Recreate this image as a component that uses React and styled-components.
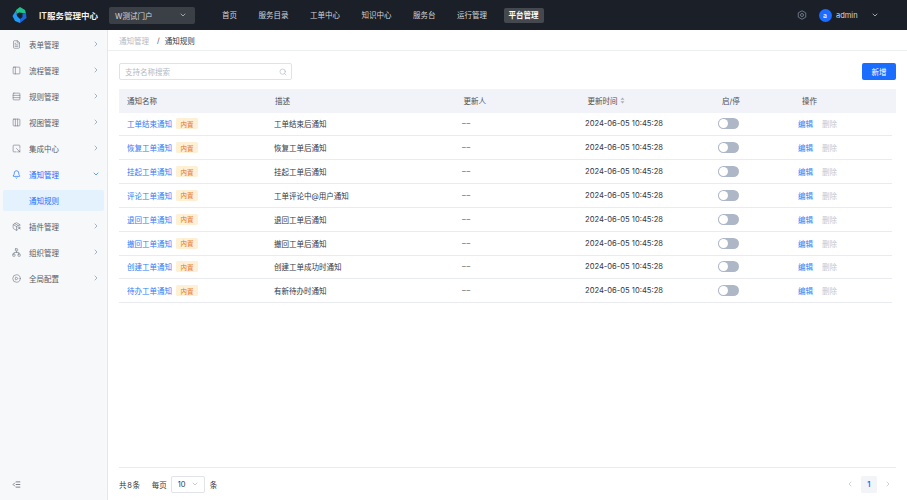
import React from 'react';
import styled, { createGlobalStyle } from 'styled-components';
import {
  FileText,
  PanelLeft,
  Rows3,
  Columns3,
  SquareArrowOutDownRight,
  Bell,
  PackageSearch,
  Network,
  CirclePlay,
  ChevronRight,
  ChevronDown,
  ChevronLeft,
  Search,
  IndentDecrease,
} from 'lucide-react';

const GlobalStyle = createGlobalStyle`
  html, body {
    margin: 0;
    padding: 0;
    height: 100%;
  }
  body {
    font-family: Inter, "Noto Sans CJK SC", sans-serif;
    color: #33383f;
    overflow: hidden;
  }
`;

const Page = styled.div`
  display: flex;
  flex-direction: column;
  height: 100vh;
`;

const TopBar = styled.header`
  display: flex;
  align-items: center;
  flex: 0 0 30px;
  height: 30px;
  padding-left: 12px;
  background: #1a1f28;
  color: #e4e6ea;
  font-size: 7.5px;
`;

const BrandTitle = styled.span`
  margin-left: 12px;
  width: 60px;
  font-size: 8.5px;
  font-weight: 600;
  color: #f2f3f5;
  white-space: nowrap;
`;

const PortalSelect = styled.div`
  display: flex;
  align-items: center;
  justify-content: space-between;
  width: 86px;
  height: 17px;
  margin-left: 10px;
  padding: 0 8px 0 6px;
  box-sizing: border-box;
  border-radius: 2px;
  background: #3b4047;
  color: #d5d7da;
`;

const Nav = styled.nav`
  display: flex;
  align-items: center;
  gap: 11.5px;
  margin-left: 22px;
`;

const NavItem = styled.span`
  padding: 4px 5px;
  border-radius: 2px;
  line-height: 7px;
  color: ${(p) => (p.$active ? '#fff' : '#d3d5d9')};
  font-weight: ${(p) => (p.$active ? 600 : 400)};
  background: ${(p) => (p.$active ? '#44494f' : 'transparent')};
`;

const UserArea = styled.div`
  display: flex;
  align-items: center;
  margin-left: auto;
  padding-right: 28px;
`;

const Avatar = styled.span`
  display: flex;
  align-items: center;
  justify-content: center;
  width: 13px;
  height: 13px;
  margin-left: 12px;
  border-radius: 50%;
  background: #1a6dff;
  color: #fff;
  font-size: 7px;
`;

const UserName = styled.span`
  width: 35px;
  margin-left: 4.5px;
  font-size: 7.5px;
  color: #d8dade;
`;

const Body = styled.div`
  display: flex;
  flex: 1;
  min-height: 0;
`;

const Sidebar = styled.aside`
  display: flex;
  flex-direction: column;
  flex: 0 0 108px;
  padding-top: 1px;
  box-sizing: border-box;
  background: #f7f8fa;
  border-right: 1px solid #e4e7ed;
`;

const MenuItem = styled.div`
  display: flex;
  align-items: center;
  flex: 0 0 26px;
  padding: 0 7.5px 0 12px;
  font-size: 7.5px;
  color: ${(p) => (p.$active ? '#1a6dff' : '#565c66')};
  svg {
    flex: none;
  }
`;

const MenuLabel = styled.span`
  flex: 1;
  margin-left: 8px;
`;

const SubItem = styled.div`
  display: flex;
  align-items: center;
  height: 21px;
  margin: 2.5px 3px;
  padding-left: 26px;
  border-radius: 2px;
  background: #e3f2fd;
  color: #1a6dff;
  font-size: 7.5px;
`;

const CollapseButton = styled.div`
  display: flex;
  margin-top: auto;
  padding: 0 0 11px 12px;
  color: #565c66;
`;

const Main = styled.main`
  display: flex;
  flex-direction: column;
  flex: 1;
  min-width: 0;
  background: #fff;
`;

const Breadcrumb = styled.div`
  display: flex;
  align-items: center;
  flex: 0 0 21px;
  box-sizing: border-box;
  padding-left: 11px;
  border-bottom: 1px solid #eceef2;
  font-size: 7.5px;
  color: #33383f;
`;

const CrumbLink = styled.span`
  color: #b4b9c2;
`;

const CrumbSlash = styled.span`
  margin: 0 5px 0 8px;
  color: #565c66;
`;

const Content = styled.div`
  display: flex;
  flex-direction: column;
  flex: 1;
  padding: 12px 11px 0;
  min-height: 0;
`;

const Toolbar = styled.div`
  display: flex;
  justify-content: space-between;
  height: 17px;
`;

const SearchBox = styled.div`
  display: flex;
  align-items: center;
  justify-content: space-between;
  width: 173px;
  padding: 0 4.5px 0 5px;
  box-sizing: border-box;
  border: 1px solid #dfe2e8;
  border-radius: 2px;
  font-size: 7.5px;
  color: #b4b9c2;
`;

const AddButton = styled.button`
  width: 34px;
  padding: 0;
  border: none;
  border-radius: 2px;
  background: #1a6dff;
  color: #fff;
  font: inherit;
  font-size: 7.5px;
`;

const HeadRow = styled.div`
  display: grid;
  grid-template-columns: 148px 188.5px 124px 134.5px 80px 1fr;
  align-items: center;
  height: 23.5px;
  margin-top: 9px;
  padding-left: 8px;
  background: #f2f3f8;
  font-size: 7.5px;
  color: #4a4f57;
`;

const Row = styled.div`
  display: grid;
  grid-template-columns: 147px 188px 123px 133px 80px 1fr;
  align-items: center;
  height: 23.85px;
  box-sizing: border-box;
  margin-right: 4px;
  padding-left: 8px;
  border-bottom: 1px solid #e9ebf0;
  font-size: 7.5px;
  color: #33383f;
`;

const NameCell = styled.div`
  display: flex;
  align-items: center;
  gap: 4px;
`;

const NameLink = styled.span`
  color: #2f7bf6;
`;

const Tag = styled.span`
  display: flex;
  align-items: center;
  justify-content: center;
  width: 22px;
  height: 11px;
  border-radius: 1.5px;
  background: #fdf0d5;
  color: #e5761f;
  font-size: 6.5px;
`;

const Placeholder = styled.div`
  letter-spacing: 0.8px;
  color: #565c66;
`;

const TimeCell = styled.div`
  font-size: 7.6px;
`;

const SortCell = styled.div`
  display: flex;
  align-items: center;
  gap: 2.5px;
`;

const Toggle = styled.span`
  display: flex;
  align-items: center;
  width: 21px;
  height: 11px;
  padding-left: 1px;
  box-sizing: border-box;
  border-radius: 6px;
  background: #aeb7c6;
  &::before {
    content: '';
    width: 9px;
    height: 9px;
    border-radius: 50%;
    background: #fff;
  }
`;

const Actions = styled.div`
  display: flex;
  gap: 9px;
`;

const ActionLink = styled.span`
  color: ${(p) => (p.$muted ? '#c3c7cf' : '#2f7bf6')};
`;

const Footer = styled.footer`
  display: flex;
  align-items: center;
  height: 32px;
  margin-top: auto;
  border-top: 1px solid #e9ebf0;
  font-size: 7.5px;
  color: #33383f;
`;

const PageSize = styled.div`
  display: flex;
  align-items: center;
  justify-content: space-between;
  width: 34px;
  height: 17px;
  margin: 0 5px 0 4px;
  padding: 0 5px 0 6px;
  box-sizing: border-box;
  border: 1px solid #e0e3e9;
  border-radius: 2px;
`;

const Total = styled.span`
  margin-right: 11px;
  letter-spacing: 0.7px;
`;

const Pager = styled.div`
  display: flex;
  align-items: center;
  margin-left: auto;
  padding-right: 4px;
  color: #b4bac6;
`;

const PageNumber = styled.span`
  display: flex;
  align-items: center;
  justify-content: center;
  width: 16.5px;
  height: 17px;
  margin: 0 7px;
  border-radius: 2px;
  background: #f2f4f8;
  color: #1a6dff;
  font-weight: 600;
`;

const menus = [
  { label: '表单管理', Icon: FileText },
  { label: '流程管理', Icon: PanelLeft },
  { label: '规则管理', Icon: Rows3 },
  { label: '视图管理', Icon: Columns3 },
  { label: '集成中心', Icon: SquareArrowOutDownRight },
];

const lowerMenus = [
  { label: '插件管理', Icon: PackageSearch },
  { label: '组织管理', Icon: Network },
  { label: '全局配置', Icon: CirclePlay },
];

const navItems = ['首页', '服务目录', '工单中心', '知识中心', '服务台', '运行管理'];

const rules = [
  ['工单结束通知', '工单结束后通知'],
  ['恢复工单通知', '恢复工单后通知'],
  ['挂起工单通知', '挂起工单后通知'],
  ['评论工单通知', '工单评论中@用户通知'],
  ['退回工单通知', '退回工单后通知'],
  ['撤回工单通知', '撤回工单后通知'],
  ['创建工单通知', '创建工单成功时通知'],
  ['待办工单通知', '有新待办时通知'],
];

const Logo = () => (
  <svg width="15" height="16" viewBox="0 0 15 16" fill="none">
    <path d="M4 3 L8 0 L13 3 L14 6.5 L10.5 6 L7 5.5 L4.5 7 Z" fill="#22c08c" />
    <path d="M0.5 9 L4 3.5 L5 9 L8 12 L8 16 L3 14 Z" fill="#1f9bf7" />
    <path d="M14 6 L14.5 11 L8 16 L8 12 L10.5 10 L10.5 6.5 Z" fill="#1667dc" />
  </svg>
);

const GearHex = () => (
  <svg width="10" height="10" viewBox="0 0 20 20" fill="none" stroke="#7f8a9c" strokeWidth="1.6">
    <path d="M10 1.5 L17.5 5.7 V14.3 L10 18.5 L2.5 14.3 V5.7 Z" />
    <circle cx="10" cy="10" r="3" />
  </svg>
);

const SortIcon = () => (
  <svg width="5" height="7" viewBox="0 0 10 14" fill="#a9afba">
    <path d="M5 1 L9 5.5 H1 Z" />
    <path d="M5 13 L1 8.5 H9 Z" />
  </svg>
);

const App = () => (
  <Page>
    <GlobalStyle />
    <TopBar>
      <Logo />
      <BrandTitle>IT服务管理中心</BrandTitle>
      <PortalSelect>
        W测试门户
        <ChevronDown size={8} />
      </PortalSelect>
      <Nav>
        {navItems.map((item) => (
          <NavItem key={item}>{item}</NavItem>
        ))}
        <NavItem $active>平台管理</NavItem>
      </Nav>
      <UserArea>
        <GearHex />
        <Avatar>a</Avatar>
        <UserName>admin</UserName>
        <ChevronDown size={8} />
      </UserArea>
    </TopBar>
    <Body>
      <Sidebar>
        {menus.map(({ label, Icon }) => (
          <MenuItem key={label}>
            <Icon size={9} strokeWidth={1.6} color="#6d7683" />
            <MenuLabel>{label}</MenuLabel>
            <ChevronRight size={8} color="#7d8fa8" />
          </MenuItem>
        ))}
        <MenuItem $active>
          <Bell size={9} strokeWidth={1.8} />
          <MenuLabel>通知管理</MenuLabel>
          <ChevronDown size={8} />
        </MenuItem>
        <SubItem>通知规则</SubItem>
        {lowerMenus.map(({ label, Icon }) => (
          <MenuItem key={label}>
            <Icon size={9} strokeWidth={1.6} color="#6d7683" />
            <MenuLabel>{label}</MenuLabel>
            <ChevronRight size={8} color="#7d8fa8" />
          </MenuItem>
        ))}
        <CollapseButton>
          <IndentDecrease size={9} />
        </CollapseButton>
      </Sidebar>
      <Main>
        <Breadcrumb>
          <CrumbLink>通知管理</CrumbLink>
          <CrumbSlash>/</CrumbSlash>
          通知规则
        </Breadcrumb>
        <Content>
          <Toolbar>
            <SearchBox>
              支持名称搜索
              <Search size={8} color="#b4b9c2" />
            </SearchBox>
            <AddButton>新增</AddButton>
          </Toolbar>
          <HeadRow>
            <div>通知名称</div>
            <div>描述</div>
            <div>更新人</div>
            <SortCell>
              更新时间
              <SortIcon />
            </SortCell>
            <div>启/停</div>
            <div>操作</div>
          </HeadRow>
          {rules.map(([name, desc]) => (
            <Row key={name}>
              <NameCell>
                <NameLink>{name}</NameLink>
                <Tag>内置</Tag>
              </NameCell>
              <div>{desc}</div>
              <Placeholder>––</Placeholder>
              <TimeCell>2024-06-05 10:45:28</TimeCell>
              <Toggle />
              <Actions>
                <ActionLink>编辑</ActionLink>
                <ActionLink $muted>删除</ActionLink>
              </Actions>
            </Row>
          ))}
          <Footer>
            <Total>共8条</Total>
            每页
            <PageSize>
              10
              <ChevronDown size={8} color="#a9afba" />
            </PageSize>
            条
            <Pager>
              <ChevronLeft size={8} />
              <PageNumber>1</PageNumber>
              <ChevronRight size={8} />
            </Pager>
          </Footer>
        </Content>
      </Main>
    </Body>
  </Page>
);

export default App;
